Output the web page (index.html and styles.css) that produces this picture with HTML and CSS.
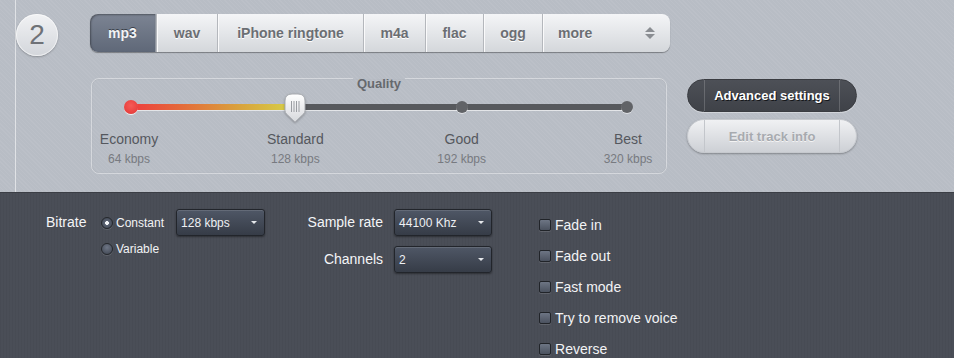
FILE: index.html
```html
<!DOCTYPE html>
<html lang="en">
<head>
    <meta charset="UTF-8">
    <meta name="viewport" content="width=device-width, initial-scale=1.0">
    <title>Audio Converter - Step 2</title>
    <link rel="stylesheet" href="styles.css">
</head>
<body>
    <div class="top">
        <div class="top-inner">
            <div class="step">2</div>
            <div class="top-main">
                <div class="formats">
                    <a class="tab active w-mp3">mp3</a>
                    <a class="tab w-wav">wav</a>
                    <a class="tab w-iphone">iPhone ringtone</a>
                    <a class="tab w-m4a">m4a</a>
                    <a class="tab w-flac">flac</a>
                    <a class="tab w-ogg">ogg</a>
                    <a class="tab tab-more w-more">more <span class="updown"><i class="up"></i><i class="down"></i></span></a>
                </div>

                <div class="quality-row">
                    <fieldset class="quality">
                        <legend>Quality</legend>
                        <div class="slider">
                            <div class="track"><div class="track-fill"></div></div>
                            <span class="dot dot-first"></span>
                            <span class="dot dot-good"></span>
                            <span class="dot dot-best"></span>
                            <span class="handle">
                                <svg width="22" height="30" viewBox="0 0 22 30">
                                    <defs>
                                        <linearGradient id="hg" x1="0" y1="0" x2="0" y2="1">
                                            <stop offset="0" stop-color="#ffffff"/>
                                            <stop offset="1" stop-color="#d6d8dc"/>
                                        </linearGradient>
                                    </defs>
                                    <path d="M11 29 L2.5 21 Q1 19.5 1 17.5 V8 Q1 1 8 1 H14 Q21 1 21 8 V17.5 Q21 19.5 19.5 21 Z" fill="url(#hg)" stroke="#a9acb1" stroke-width="1"/>
                                    <g stroke="#9a9da2" stroke-width="1">
                                        <line x1="7.5" y1="8" x2="7.5" y2="19"/>
                                        <line x1="10" y1="8" x2="10" y2="19"/>
                                        <line x1="12.5" y1="8" x2="12.5" y2="19"/>
                                        <line x1="15" y1="8" x2="15" y2="19"/>
                                    </g>
                                </svg>
                            </span>
                        </div>
                        <div class="stops">
                            <div class="stop"><div class="stop-name">Economy</div><div class="stop-rate">64 kbps</div></div>
                            <div class="stop"><div class="stop-name">Standard</div><div class="stop-rate">128 kbps</div></div>
                            <div class="stop"><div class="stop-name">Good</div><div class="stop-rate">192 kbps</div></div>
                            <div class="stop"><div class="stop-name">Best</div><div class="stop-rate">320 kbps</div></div>
                        </div>
                    </fieldset>

                    <div class="actions">
                        <button class="btn btn-dark"><span>Advanced settings</span></button>
                        <button class="btn btn-light"><span>Edit track info</span></button>
                    </div>
                </div>
            </div>
        </div>
    </div>

    <div class="bottom">
        <div class="bitrate">
            <div class="field-label bitrate-label">Bitrate</div>
            <div class="radios">
                <label class="radio-row"><span class="radio checked"></span>Constant</label>
                <label class="radio-row"><span class="radio"></span>Variable</label>
            </div>
            <div class="select sel-bitrate"><span>128 kbps</span><i class="caret"></i></div>
        </div>

        <div class="audio-opts">
            <div class="field-label">Sample rate</div>
            <div class="select sel-rate"><span>44100 Khz</span><i class="caret"></i></div>
            <div class="field-label">Channels</div>
            <div class="select sel-rate"><span>2</span><i class="caret"></i></div>
        </div>

        <div class="effects">
            <label class="check-row"><span class="check"></span>Fade in</label>
            <label class="check-row"><span class="check"></span>Fade out</label>
            <label class="check-row"><span class="check"></span>Fast mode</label>
            <label class="check-row"><span class="check"></span>Try to remove voice</label>
            <label class="check-row"><span class="check"></span>Reverse</label>
        </div>
    </div>
</body>
</html>
```

FILE: styles.css
```css
* { box-sizing: border-box; }
html, body {
    margin: 0;
    height: 358px;
    overflow: hidden;
}
body {
    font-family: 'Liberation Sans', Arial, sans-serif;
    background-color: #4a4e57;
}
.top {
    height: 192px;
    padding-left: 15px;
    background-color: #b8bdc5;
    background-image: repeating-linear-gradient(45deg, rgba(255,255,255,0.05) 0 1px, transparent 1px 3px);
}
.top-inner {
    height: 100%;
    border-left: 1px solid rgba(255,255,255,0.55);
    padding-top: 14px;
    display: flex;
}
.step {
    width: 42px;
    height: 42px;
    border-radius: 50%;
    background: linear-gradient(#f1f2f4, #d3d6db);
    box-shadow: 0 1px 2px rgba(0,0,0,0.25), inset 0 0 0 1px rgba(255,255,255,0.6);
    color: #6f7277;
    font-size: 28px;
    line-height: 42px;
    text-align: center;
    margin-right: 32px;
}
.top-main {
    display: flex;
    flex-direction: column;
}

/* format tabs */
.formats {
    display: flex;
    height: 38px;
    border-radius: 8px;
    background: linear-gradient(#f4f5f7, #d4d7db);
    box-shadow: 0 1px 1px rgba(0,0,0,0.35);
    width: 580px;
}
.tab {
    display: flex;
    align-items: center;
    justify-content: center;
    font-weight: bold;
    font-size: 14px;
    color: #6b6e73;
    text-shadow: 0 1px 0 #fff;
    border-left: 1px solid #b4b7bc;
    box-shadow: inset 1px 0 0 #fafafb;
    cursor: pointer;
}
.tab:first-child { border-left: none; box-shadow: none; }
.tab.active {
    background: linear-gradient(#7c8493, #5f6878);
    color: #f2f3f5;
    text-shadow: 0 -1px 0 #3a404a;
    border-radius: 8px 0 0 8px;
    box-shadow: inset 1px 1px 2px rgba(0,0,0,0.35);
    border-right: 1px solid #8f959f;
}
.w-mp3 { width: 66px; }
.w-wav { width: 61px; }
.w-iphone { width: 146px; }
.w-m4a { width: 62px; }
.w-flac { width: 58px; }
.w-ogg { width: 59px; }
.w-more { width: 128px; justify-content: flex-start; padding-left: 15px; }
.updown {
    margin-left: auto;
    margin-right: 15px;
    display: flex;
    flex-direction: column;
    gap: 2px;
}
.updown i {
    display: block;
    width: 0;
    height: 0;
    border-left: 5px solid transparent;
    border-right: 5px solid transparent;
}
.updown .up { border-bottom: 5px solid #8a8d92; }
.updown .down { border-top: 5px solid #8a8d92; }

/* quality */
.quality-row {
    display: flex;
    margin-top: 14px;
}
.quality {
    width: 576px;
    margin: 0 0 0 1px;
    padding: 0 0 6px;
    border: 1px solid rgba(255,255,255,0.4);
    border-radius: 8px;
    box-shadow: inset 0 0 1px rgba(0,0,0,0.15);
}
.quality legend {
    margin: 0 auto;
    padding: 11px 4px 0;
    font-size: 13px;
    line-height: 14px;
    font-weight: bold;
    color: #66696e;
}
.slider {
    position: relative;
    height: 30px;
    margin: 1px 39px 0 39px;
}
.track {
    position: absolute;
    left: 0;
    right: 0;
    top: 12px;
    height: 6px;
    border-radius: 3px;
    background: #57595d;
    box-shadow: 0 1px 0 rgba(255,255,255,0.6);
}
.track-fill {
    width: 33.4%;
    height: 100%;
    border-radius: 3px 0 0 3px;
    background: linear-gradient(90deg, #ee3d3f, #e46a3a 30%, #d9a23c 65%, #d6d449);
}
.dot {
    position: absolute;
    top: 9px;
    width: 12px;
    height: 12px;
    margin-left: -6px;
    border-radius: 50%;
    background: #616367;
    box-shadow: 0 1px 0 rgba(255,255,255,0.5);
}
.dot-first {
    left: 0;
    top: 8px;
    width: 14px;
    height: 14px;
    margin-left: -7px;
    background: radial-gradient(circle at 50% 40%, #f65b57, #e23634);
    box-shadow: 0 1px 0 rgba(255,255,255,0.8);
}
.dot-good { left: 66.67%; }
.dot-best { left: 100%; }
.handle {
    position: absolute;
    left: 33.33%;
    top: 1px;
    margin-left: -12px;
    width: 22px;
    height: 30px;
    filter: drop-shadow(0 1px 1px rgba(0,0,0,0.25));
}
.handle svg { display: block; }
.stops {
    display: flex;
    justify-content: space-between;
    margin-top: 8px;
    padding: 0 1px 0 0;
}
.stop {
    width: 74px;
    text-align: center;
}
.stop-name {
    font-size: 14px;
    line-height: 18px;
    color: #55585e;
}
.stop-rate {
    margin-top: 3px;
    font-size: 12px;
    line-height: 16px;
    color: #777a80;
}

/* buttons */
.actions {
    margin: 13px 0 0 20px;
    display: flex;
    flex-direction: column;
    gap: 7px;
}
.btn {
    width: 170px;
    height: 33px;
    padding: 0 16px;
    border-radius: 17px;
    font-family: 'Liberation Sans', Arial, sans-serif;
    font-weight: bold;
    font-size: 13px;
    cursor: pointer;
}
.btn span {
    display: flex;
    align-items: center;
    justify-content: center;
    height: 100%;
}
.btn-dark {
    border: 1px solid #3a3c41;
    background: linear-gradient(#4d5057, #3f4248);
    color: #fff;
    text-shadow: 1px 1px 0 #15171a;
    box-shadow: 0 1px 0 rgba(255,255,255,0.35);
}
.btn-dark span {
    border-left: 1px solid rgba(255,255,255,0.18);
    border-right: 1px solid rgba(255,255,255,0.18);
}
.btn-light {
    height: 34px;
    border: 1px solid #c6c9ce;
    background: linear-gradient(#f0f1f3, #cdd0d5);
    color: #a7aaaf;
    text-shadow: 0 1px 0 #f4f4f4;
    box-shadow: 0 1px 2px rgba(0,0,0,0.3);
}
.btn-light span {
    border-left: 1px solid #c3c6cb;
    border-right: 1px solid #c3c6cb;
}

/* settings panel */
.bottom {
    height: 166px;
    border-top: 1px solid #3b3e45;
    background-color: #4a4e57;
    background-image: repeating-linear-gradient(90deg, rgba(0,0,0,0.035) 0 1px, transparent 1px 3px);
    padding: 16px 0 0 46px;
    display: flex;
    align-items: flex-start;
    color: #f2f3f5;
}
.field-label {
    font-size: 14px;
    line-height: 27px;
    color: #f4f5f7;
}
.bitrate {
    display: flex;
    align-items: flex-start;
}
.bitrate-label {
    width: 41px;
    margin-right: 14px;
}
.radios {
    display: flex;
    flex-direction: column;
    margin-top: 1px;
}
.radio-row {
    display: flex;
    align-items: center;
    height: 26px;
    font-size: 12px;
    gap: 3px;
}
.radio {
    width: 12px;
    height: 12px;
    border-radius: 50%;
    background: radial-gradient(circle at 50% 35%, #6e7686, #3c424d);
    border: 1px solid #25282d;
    box-shadow: 0 1px 0 rgba(255,255,255,0.12);
}
.radio.checked {
    background: radial-gradient(circle, #f4f5f7 0 1.6px, #5a6272 2.2px, #3a404a);
}
.select {
    position: relative;
    display: flex;
    align-items: center;
    height: 27px;
    padding-left: 4px;
    border: 1px solid #22252b;
    border-radius: 3px;
    background: linear-gradient(#4f5766, #363c47);
    box-shadow: inset 0 1px 0 rgba(255,255,255,0.12), 0 1px 2px rgba(0,0,0,0.4);
    font-size: 12px;
    color: #eef0f3;
}
.caret {
    position: absolute;
    right: 7px;
    top: 11px;
    width: 0;
    height: 0;
    border-left: 3px solid transparent;
    border-right: 3px solid transparent;
    border-top: 3px solid #e6e8eb;
}
.sel-bitrate {
    width: 89px;
    margin-left: 12px;
}
.audio-opts {
    display: grid;
    grid-template-columns: 90px 98px;
    column-gap: 11px;
    row-gap: 10px;
    margin-left: 28px;
}
.audio-opts .field-label { text-align: right; }
.sel-rate { width: 98px; }
.effects {
    margin-left: 47px;
    display: flex;
    flex-direction: column;
}
.check-row {
    display: flex;
    align-items: center;
    height: 31px;
    gap: 4px;
    font-size: 14px;
}
.check {
    width: 12px;
    height: 12px;
    border-radius: 2px;
    border: 1px solid #212429;
    background: linear-gradient(#6d7584, #4b525f);
    box-shadow: 0 1px 0 rgba(255,255,255,0.12);
}
```
